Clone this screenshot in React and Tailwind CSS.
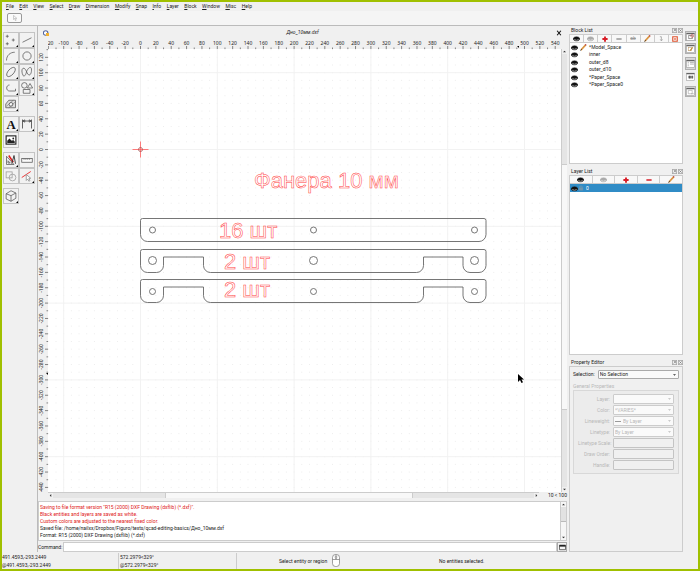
import React from "react";

const SCALE = 0.768;
const ORIGIN_X = 92.5;
const ORIGIN_Y = 100.5;

const range = (from, to, step) => {
  const out = [];
  for (let v = from; v <= to; v += step) out.push(v);
  return out;
};

const MENUS = ["File", "Edit", "View", "Select", "Draw", "Dimension", "Modify", "Snap", "Info", "Layer", "Block", "Window", "Misc", "Help"];

function MenuBar() {
  return (
    <nav className="flex h-[9px] w-[250px] shrink-0 items-center justify-between pl-1">
      {MENUS.map((m) => (
        <button key={m} type="button" className="whitespace-nowrap">
          <span className="underline">{m[0]}</span>
          {m.slice(1)}
        </button>
      ))}
    </nav>
  );
}

function Icon({ children, className = "size-3", box = "0 0 16 16" }) {
  return (
    <svg viewBox={box} className={className} fill="none" stroke="#555" strokeWidth="1" aria-hidden="true">
      {children}
    </svg>
  );
}

const TOOLS = [
  [
    ["Point", <path d="M3 1v4M1 3h4M11 6v4M9 8h4M3 11v4M1 13h4" />],
    ["Line", <path d="M2 11 14 5" />],
    ["Arc", <path d="M2 14C2 7 7 3 13 3" />],
    ["Circle", <circle cx="8" cy="8" r="5.500" />],
    ["Ellipse", <ellipse cx="8" cy="8" rx="7.500" ry="3.800" transform="rotate(-48 8 8)" />],
    ["Spline", <path d="M3 13C0 8 1 2 4 3s4 9 7 9 4-9 2-10-5 3-6 7-3 5-4 4" />],
    ["Polyline", <path d="M6 4C1 4 1 12 6 12h8V9" />],
    ["Shape", <><circle cx="4.500" cy="4.500" r="3.700" /><path d="m12 2 3.500 6h-7zM3 10h9v5H3z" /></>],
    ["Hatch", <><path d="M1 13V8l4-5h9v10z" fill="#ddd" /><circle cx="8" cy="8.500" r="2.500" fill="#fff" /><path d="M2 11l9-8M5 13l9-8" strokeWidth=".6" /></>],
  ],
  [
    ["Text", <text x="8" y="14" textAnchor="middle" fontSize="17" fontWeight="bold" fill="#111" stroke="none" fontFamily="'Liberation Serif', serif">A</text>],
    ["Dimension", <path d="M2 14V2M14 14V2M2 4h12M2 4l3-1.500v3zM14 4l-3-1.500v3z" strokeWidth="1.200" />],
    ["Image", <><rect x="1.500" y="2.500" width="13" height="11" fill="#fff" stroke="#222" strokeWidth="1.500" /><path d="M3 12V9l3-3 3 3 2-1 2 2v2z" fill="#222" stroke="none" /><circle cx="11" cy="6" r="1.200" fill="#222" stroke="none" /></>],
  ],
  [
    ["Modify", <><path d="M2 3v11h10zM4 9v3h3z" /><path d="m5 2 6 9" stroke="#d22" strokeWidth="2" /><path d="m9 13 3-11 2 11" stroke="#333" strokeWidth="1.200" /></>],
    ["Measure", <><rect x="1" y="6" width="14" height="5" fill="#fafafa" /><path d="M4 6v2M6.500 6v2M9 6v2M11.500 6v2" strokeWidth=".7" /></>],
    ["Boolean", <g stroke="#999"><rect x="1.500" y="2.500" width="8" height="8" /><circle cx="10" cy="10" r="4.500" /></g>],
    ["Select", <><path d="M1 10 13 2" stroke="#e33" strokeWidth="1.300" /><path d="M7 6v8l2-2 1.500 3 1.500-1-1.500-3H13z" stroke="#888" fill="#fff" /></>],
  ],
  [["Block", <path d="m8 1 6.500 3v7L8 15l-6.500-3V5zM1.500 5 8 7.500 14.500 4M8 7.500V15" />]],
];
const WITHOUT_SUBMENU = ["Image", "Measure", "Boolean"];

function ToolPalette() {
  return (
    <aside className="flex w-[35px] shrink-0 flex-col gap-1 pt-[6px] pl-px">
      {TOOLS.map((group, i) => (
        <div key={i} className="flex flex-wrap">
          {group.map(([name, art]) => (
            <button key={name} type="button" aria-label={name} className="relative flex size-4 items-center justify-center border border-[#c4c4c4] bg-[#f2f2f2]">
              <Icon>{art}</Icon>
              {!WITHOUT_SUBMENU.includes(name) && (
                <svg viewBox="0 0 2 2" className="absolute right-0 bottom-0 size-[2px]" aria-hidden="true"><path d="M2 0v2H0z" fill="#000" /></svg>
              )}
            </button>
          ))}
        </div>
      ))}
    </aside>
  );
}

function HorizontalRuler() {
  return (
    <svg className="h-[10px] w-full font-['Noto_Sans',sans-serif] text-[5px]" aria-label="Horizontal ruler">
      {range(-120, 540, 10).map((v) => {
        const x = ORIGIN_X + v * SCALE;
        const major = v % 20 === 0;
        return (
          <g key={v}>
            <path d={`M${x} ${major ? 7 : 8.5}V10`} stroke="#666" strokeWidth=".8" />
            {major && <text x={x} y="5.500" textAnchor="middle" fill="#222">{v}</text>}
          </g>
        );
      })}
      <path d="M469 7l2 2V7z" fill="#000" />
    </svg>
  );
}

function VerticalRuler() {
  return (
    <svg className="h-full w-[10px] font-['Noto_Sans',sans-serif] text-[5px]" aria-label="Vertical ruler">
      {range(-440, 130, 10).map((v) => {
        const y = ORIGIN_Y - v * SCALE;
        const major = v % 20 === 0;
        return (
          <g key={v}>
            <path d={`M${major ? 7 : 8.5} ${y}H10`} stroke="#666" strokeWidth=".8" />
            {major && <text transform={`translate(5 ${y}) rotate(-90)`} textAnchor="middle" fill="#222">{v}</text>}
          </g>
        );
      })}
      <path d="M8 324h2v2z" fill="#000" />
    </svg>
  );
}

const plainPlate = (y) =>
  `M94.500 ${y}H436q2 0 2 2V${y + 16}a7 7 0 0 1-7 7H99.500a7 7 0 0 1-7-7V${y + 2}q0-2 2-2z`;
const notchedPlate = (y) =>
  `M94.500 ${y}H436q2 0 2 2V${y + 16}a7 7 0 0 1-7 7H422a7 7 0 0 1-7-7V${y + 7.5}H375.500V${y + 16}a7 7 0 0 1-7 7H162.500a7 7 0 0 1-7-7V${y + 7.5}H115.500V${y + 16}a7 7 0 0 1-7 7H99.500a7 7 0 0 1-7-7V${y + 2}q0-2 2-2z`;

function Drawing() {
  return (
    <svg className="h-full w-full bg-white" aria-label="Drawing">
      <defs>
        <pattern id="dots" x={ORIGIN_X - 0.5} y={ORIGIN_Y - 0.5} width="7.68" height="7.68" patternUnits="userSpaceOnUse">
          <rect width="1" height="1" fill="#ececec" />
        </pattern>
      </defs>
      <rect width="100%" height="100%" fill="url(#dots)" />
      <g stroke="#f2f2f2">
        {range(-100, 900, 100).map((v) => (
          <line key={v} x1={ORIGIN_X + v * SCALE} x2={ORIGIN_X + v * SCALE} y1="0" y2="100%" />
        ))}
        {range(-900, 100, 100).map((v) => (
          <line key={v} y1={ORIGIN_Y - v * SCALE} y2={ORIGIN_Y - v * SCALE} x1="0" x2="100%" />
        ))}
      </g>
      <g stroke="#ff5a5a" fill="none" strokeWidth=".8">
        <path d="M84.500 100.500h16M92.500 92.500v16" />
        <circle cx="92.500" cy="100.500" r="2" stroke="#a55" />
      </g>
      <g stroke="#666" fill="none" strokeWidth=".9">
        <path d={plainPlate(169.5)} />
        <path d={notchedPlate(200.5)} />
        <path d={notchedPlate(230.5)} />
        {[[181, 3], [211.5, 4], [242.5, 3]].map(([y, r]) =>
          [104.5, 265.5, 426.5].map((x) => <circle key={`${x}-${y}`} cx={x} cy={y} r={r} />)
        )}
      </g>
      <g fontFamily="'Liberation Sans', Arial, sans-serif" fontSize="22" fill="none" stroke="#ff4040" strokeWidth=".5">
        <text x="206" y="139">Фанера 10 мм</text>
        <text x="171" y="189">16 шт</text>
        <text x="176" y="220">2 шт</text>
        <text x="176" y="248">2 шт</text>
      </g>
      <path d="M470 325v8l2-2 1.500 3 1.500-.7-1.500-2.800h2.500z" fill="#000" />
    </svg>
  );
}

const ARROWS = { up: "M0 3h4L2 1z", down: "M0 1h4L2 3z", left: "M3 0v4L1 2z", right: "M1 0v4l2-2z" };
function Arrow({ dir }) {
  return (
    <svg viewBox="0 0 4 4" className="m-px size-[3px] shrink-0" aria-hidden="true"><path d={ARROWS[dir]} fill="#333" /></svg>
  );
}

function DocumentView() {
  return (
    <section className="flex min-h-0 flex-1 flex-col">
      <header className="flex h-[13px] shrink-0 items-center px-[5px]">
        <Icon className="size-[6px]"><circle cx="7" cy="8" r="6" fill="#fff" stroke="#5566a0" strokeWidth="3" /><path d="M8 8h8v8H8z" fill="#f0b030" stroke="none" /></Icon>
        <h1 className="flex-1 text-center italic">Дно_10мм.dxf</h1>
        <button type="button" aria-label="Close document"><Icon className="size-[6px]"><path d="m3 2 10 12M13 2 3 14" stroke="#111" strokeWidth="3" /></Icon></button>
      </header>
      <div className="grid min-h-0 flex-1 grid-cols-[10px_minmax(0,1fr)_6px] grid-rows-[10px_minmax(0,1fr)_6px]">
        <div />
        <HorizontalRuler />
        <div />
        <VerticalRuler />
        <Drawing />
        <div className="flex flex-col items-center border-l border-[#ccc]">
          <Arrow dir="up" />
          <div className="w-full grow-[110] border-b border-[#ccc] bg-[#e5e5e5]" />
          <div className="w-full grow-[244] bg-[#f8f8f8]" />
          <div className="w-full grow-[77] border-t border-[#ccc] bg-[#e5e5e5]" />
          <Arrow dir="down" />
        </div>
        <div className="col-span-3 flex items-center pl-[10px]">
          <div className="flex h-full flex-1 items-center border-t border-[#ccc]">
            <Arrow dir="left" />
            <div className="h-full grow-[113] border-r border-[#ccc] bg-[#e5e5e5]" />
            <div className="h-full grow-[247] bg-[#f8f8f8]" />
            <div className="h-full grow-[122] border-l border-[#ccc] bg-[#e5e5e5]" />
            <Arrow dir="right" />
          </div>
          <span className="w-7 text-right">10 &lt; 100</span>
        </div>
      </div>
    </section>
  );
}

function CommandPanel() {
  return (
    <section className="shrink-0 pt-[3px]">
      <div className="flex h-10 border border-[#ccc] bg-white">
        <div className="flex min-w-0 flex-1 flex-col justify-end overflow-hidden pb-px pl-px leading-[7px] whitespace-nowrap">
          <p className="text-[#0000c0]">Command: save</p>
          <div className="text-[#e02020]">
            <p>Saving to file format version "R15 (2000) DXF Drawing (dxflib) (*.dxf)".</p>
            <p>Black entities and layers are saved as white.</p>
            <p>Custom colors are adjusted to the nearest fixed color.</p>
          </div>
          <p>Saved file: /home/nailxx/Dropbox/Figuro/texts/qcad-editing-basics/Дно_10мм.dxf</p>
          <p>Format: R15 (2000) DXF Drawing (dxflib) (*.dxf)</p>
        </div>
        <div className="flex w-[6px] flex-col items-center border-l border-[#ccc] bg-[#f6f6f6]">
          <Arrow dir="up" />
          <div className="w-full flex-1 border-b border-[#bbb] bg-[#e2e2e2]" />
          <div className="w-full flex-1" />
          <Arrow dir="down" />
        </div>
      </div>
      <div className="flex h-[11px] items-stretch pt-px">
        <label htmlFor="command" className="flex w-[25px] items-center">Command:</label>
        <input id="command" className="min-w-0 flex-1 border border-[#ccc] bg-white outline-none" />
        <button type="button" aria-label="Command history" className="flex w-[10px] items-center justify-center border border-[#aaa] bg-[#f4f4f4]">
          <Icon className="size-[7px]"><path d="M1 3h14v10H1z" strokeWidth="2" /><path d="M1 4h14" strokeWidth="4" stroke="#222" /></Icon>
        </button>
      </div>
    </section>
  );
}

const Eye = ({ color = "#111" }) => (
  <Icon className="size-[7px] shrink-0"><path d="M0 9C2 2 14 2 16 9 13 15 3 15 0 9z" fill={color} stroke={color} /><path d="M3 9c1 4 9 4 10 0" stroke="#fff" strokeWidth="1.200" /></Icon>
);
const Pencil = () => (
  <Icon className="size-[7px] shrink-0"><path d="M2 14 13 2" stroke="#d99340" strokeWidth="3.500" /><path d="m1 15 3-3" stroke="#333" strokeWidth="2" /><path d="m12 3 2-2" stroke="#b44" strokeWidth="3.500" /></Icon>
);
const Plus = () => <Icon className="size-[6px]"><path d="M8 1v14M1 8h14" stroke="#d81e28" strokeWidth="5" /></Icon>;
const Minus = ({ color = "#d81e28" }) => <Icon className="size-[6px]"><path d="M1 8h14" stroke={color} strokeWidth="4" /></Icon>;

function PanelTitle({ children }) {
  return (
    <header className="flex h-2 shrink-0 items-center gap-px pl-[2px]">
      <h2 className="flex-1">{children}</h2>
      <button type="button" aria-label={`Float ${children}`}><Icon className="size-[5px]"><path d="M1 1h14v14H1zM5 11l6-6M6 5h5v5" strokeWidth="1.500" /></Icon></button>
      <button type="button" aria-label={`Close ${children}`}><Icon className="size-[5px]"><path d="M1 1h14v14H1zM4 4l8 8M12 4l-8 8" strokeWidth="1.500" /></Icon></button>
    </header>
  );
}

function ButtonRow({ items }) {
  return (
    <div className="flex h-[9px] shrink-0">
      {items.map(([name, art]) => (
        <button key={name} type="button" aria-label={name} className="flex min-w-0 flex-1 items-center justify-center border border-l-0 border-[#ccc] bg-[#f8f8f8] first:border-l">
          {art}
        </button>
      ))}
    </div>
  );
}

const BLOCK_BUTTONS = [
  ["Show all blocks", <Eye />],
  ["Hide all blocks", <Eye color="#aaa" />],
  ["Add block", <Plus />],
  ["Remove block", <Minus color="#999" />],
  ["Rename block", <span className="text-[#999] line-through">ab</span>],
  ["Edit block", <Pencil />],
  ["Insert block", <Icon className="size-[6px]"><path d="M5 2h4v10M6 9l3 4 3-4" stroke="#999" strokeWidth="2" /></Icon>],
  ["Create block", <Icon className="size-[6px]"><path d="M2 2h12v12H2z" stroke="#e0532f" strokeWidth="3" /><path d="M6 6h4v4H6z" fill="#e0532f" stroke="none" /></Icon>],
];
const LAYER_BUTTONS = [
  ["Show all layers", <Eye />],
  ["Hide all layers", <Eye color="#aaa" />],
  ["Add layer", <Plus />],
  ["Remove layer", <Minus />],
  ["Edit layer", <Pencil />],
];
const BLOCKS = ["*Model_Space", "inner", "outer_d8", "outer_d10", "*Paper_Space", "*Paper_Space0"];

function BlockList() {
  return (
    <section className="flex min-h-0 flex-col pb-[3px]">
      <PanelTitle>Block List</PanelTitle>
      <ButtonRow items={BLOCK_BUTTONS} />
      <ul className="min-h-0 flex-1 border border-t-0 border-[#ccc] bg-white">
        {BLOCKS.map((b, i) => (
          <li key={b} className="flex h-[7px] items-center pl-px odd:mt-px">
            <Eye />
            <span className="flex w-[11px] justify-center">{i === 0 && <Pencil />}</span>
            {b}
          </li>
        ))}
      </ul>
    </section>
  );
}

function LayerList() {
  return (
    <section className="flex min-h-0 flex-col pb-[3px]">
      <PanelTitle>Layer List</PanelTitle>
      <ButtonRow items={LAYER_BUTTONS} />
      <ul className="min-h-0 flex-1 border border-t-0 border-[#ccc] bg-white">
        <li className="flex h-2 items-center bg-[#308cc6] pl-px text-white">
          <Eye />
          <Icon className="size-[6px]"><path d="M3 7h10v7H3z" fill="#7195ad" stroke="#7195ad" /><path d="M5 7V3h6v4" stroke="#7195ad" strokeWidth="2" /></Icon>
          <span className="pl-[2px]">0</span>
        </li>
      </ul>
    </section>
  );
}

function Select({ id, value, disabled, swatch }) {
  return (
    <div className="relative h-full min-w-0 flex-1">
      <select id={id} disabled={disabled} className={`block h-full w-full appearance-none rounded-[1px] border bg-[#fafafa] opacity-100 outline-none ${disabled ? "border-[#ccc] text-[#b8b8b8]" : "border-[#aaa]"} ${swatch ? "pl-[9px]" : "pl-px"}`}>
        <option>{value}</option>
      </select>
      {swatch && <span className="absolute top-1/2 left-[2px] h-px w-[6px] bg-[#999]" />}
      <svg viewBox="0 0 4 4" className={`pointer-events-none absolute top-1/2 right-[3px] size-[3px] -translate-y-1/2 ${disabled ? "fill-[#bbb]" : "fill-[#333]"}`} aria-hidden="true"><path d="M0 1h4L2 3z" /></svg>
    </div>
  );
}

const PROPERTIES = [
  ["Layer:", "select", ""],
  ["Color:", "select", "*VARIES*"],
  ["Lineweight:", "select", "By Layer", true],
  ["Linetype:", "select", "By Layer"],
  ["Linetype Scale:", "input"],
  ["Draw Order:", "input"],
  ["Handle:", "input"],
];

function PropertyEditor() {
  return (
    <section className="flex min-h-0 flex-col">
      <PanelTitle>Property Editor</PanelTitle>
      <div className="min-h-0 flex-1 border border-[#ccc] px-[3px] pt-[3px]">
        <div className="flex h-[9px] items-center gap-[3px]">
          <label htmlFor="selection">Selection:</label>
          <Select id="selection" value="No Selection" />
        </div>
        <fieldset disabled className="min-w-0 text-[#b8b8b8]">
          <legend className="pt-1 leading-[7px]">General Properties</legend>
          <div className="flex flex-col gap-px border border-[#d8d8d8] bg-[#ececec] px-1 py-[3px]">
            {PROPERTIES.map(([label, kind, value, swatch]) => (
              <div key={label} className="flex h-[10px] items-center gap-[3px]">
                <label htmlFor={label} className="w-8 shrink-0 text-right whitespace-nowrap">{label}</label>
                {kind === "select" ? (
                  <Select id={label} value={value} disabled swatch={swatch} />
                ) : (
                  <input id={label} className="h-full min-w-0 flex-1 rounded-[1px] border border-[#c4c4c4] bg-[#f0f0f0]" />
                )}
              </div>
            ))}
          </div>
        </fieldset>
      </div>
    </section>
  );
}

const RAIL = [
  ["Toggle property editor", "h-[10px]", true, <><rect x="5" y="6" width="6" height="6" /><circle cx="11" cy="7" r="2.500" stroke="#c44" /></>],
  ["Toggle layers", "h-[11px] mt-[2px]", true, <><rect x="4" y="6" width="6" height="6" stroke="#b96" /><path d="m7 12 5-6" stroke="#b83" strokeWidth="2" /></>],
  ["Toggle list", "h-[13px] mt-[3px]", true, <path d="M3 6h2M3 9h2M3 12h2M7 6h7M7 9h7" stroke="#777" />],
  ["Toggle library", "h-[10px] mt-px", false, <path d="M5 7h3v4H5zM10 7h2v4h-2z" fill="#555" />],
  ["Toggle command line", "h-[11px] mt-[5px]", true, <path d="M4 6h7v6H4zM9 12h5" stroke="#999" />],
];

function Rail() {
  return (
    <aside className="flex w-[15px] shrink-0 flex-col items-center pt-[5px]">
      {RAIL.map(([name, size, active, art]) => (
        <button key={name} type="button" aria-label={name} className={`flex w-[11px] items-center justify-center border ${size} ${active ? "border-[#b0b0b0] bg-[#d8d8d8]" : "border-transparent"}`}>
          <Icon className="size-[9px]"><rect x="1" y="2" width="14" height="13" fill="#fff" stroke="#999" /><path d="M1 3h14" strokeWidth="2" stroke="#555" />{art}</Icon>
        </button>
      ))}
    </aside>
  );
}

function StatusBar() {
  return (
    <footer className="flex h-[17px] shrink-0 items-center leading-[8px]">
      <div className="w-[117px] border-r border-[#ccc]"><p>491.4593,-293.2449</p><p>@491.4593,-293.2449</p></div>
      <div className="w-[118px] border-r border-[#ccc] pl-px"><p>572.2979&lt;329°</p><p>@572.2979&lt;329°</p></div>
      <div className="flex w-[202px] items-center gap-[5px] pl-[42px]">
        <p>Select entity or region</p>
        <svg viewBox="0 0 8 13" className="h-[13px] w-2" fill="#fff" stroke="#777" strokeWidth=".7" aria-hidden="true"><rect x=".5" y=".5" width="7" height="12" rx="3" /><path d="M.5 5.500h7M4 .5v5" /><rect x="3.300" y="2" width="1.400" height="2.500" rx=".7" /></svg>
      </div>
      <p>No entities selected.</p>
    </footer>
  );
}

export default function App() {
  return (
    <div className="flex h-screen flex-col overflow-hidden border-2 border-[#a0c000] bg-[#f0f0f0] font-['Roboto','Noto_Sans',sans-serif] text-[5px] leading-[7px] text-[#222]">
      <MenuBar />
      <div className="flex h-[15px] shrink-0 items-center border-b border-[#bbb] bg-[#f5f5f5] pl-[5px]">
        <button type="button" aria-label="Selection tool" className="flex h-[10px] w-[15px] items-center justify-center rounded-[2px] border border-[#999] bg-[#fafafa]">
          <Icon className="size-[6px]"><path d="M4 1v11l3-3 2 6 2-1-2-5h4z" stroke="#aaa" strokeWidth="1.500" /></Icon>
        </button>
      </div>
      <div className="flex min-h-0 flex-1">
        <ToolPalette />
        <main className="mr-[2px] flex min-w-0 flex-1 flex-col border-l border-[#bbb]">
          <DocumentView />
          <CommandPanel />
        </main>
        <div className="grid w-[114px] shrink-0 grid-cols-[minmax(0,1fr)] grid-rows-[141fr_191fr_194fr]">
          <BlockList />
          <LayerList />
          <PropertyEditor />
        </div>
        <Rail />
      </div>
      <StatusBar />
    </div>
  );
}
